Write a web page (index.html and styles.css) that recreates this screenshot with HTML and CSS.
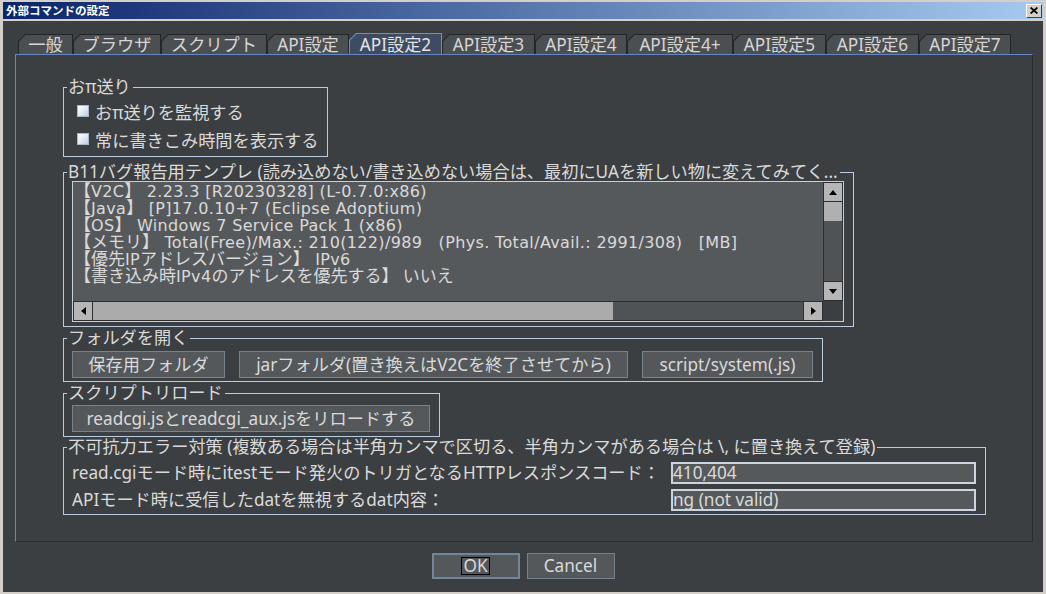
FILE: index.html
```html
<!DOCTYPE html>
<html lang="ja">
<head>
<meta charset="utf-8">
<title>外部コマンドの設定</title>
<link rel="stylesheet" href="styles.css">
</head>
<body>
<div class="window">
  <div class="titlebar">
    <span class="title">外部コマンドの設定</span>
    <span class="close"><svg width="8" height="7" viewBox="0 0 8 7"><path d="M0.6 0.5 L7.4 6.5 M7.4 0.5 L0.6 6.5" stroke="#000" stroke-width="1.7" fill="none"/></svg></span>
  </div>
  <div class="client">
    <div class="tabs">
      <div class="tab t1"><span>一般</span></div>
      <div class="tab t2"><span>ブラウザ</span></div>
      <div class="tab t3"><span>スクリプト</span></div>
      <div class="tab t4"><span>API設定</span></div>
      <div class="tab t5 sel"><span>API設定2</span></div>
      <div class="tab t6"><span>API設定3</span></div>
      <div class="tab t7"><span>API設定4</span></div>
      <div class="tab t8"><span>API設定4+</span></div>
      <div class="tab t9"><span>API設定5</span></div>
      <div class="tab t10"><span>API設定6</span></div>
      <div class="tab t11"><span>API設定7</span></div>
    </div>
    <div class="panel">
      <fieldset class="group">
        <legend>おπ送り</legend>
        <div class="body checks">
          <label class="check"><span class="cb"></span>おπ送りを監視する</label>
          <label class="check"><span class="cb"></span>常に書きこみ時間を表示する</label>
        </div>
      </fieldset>

      <fieldset class="group g-tpl">
        <legend>B11バグ報告用テンプレ (読み込めない/書き込めない場合は、最初にUAを新しい物に変えてみてく...</legend>
        <div class="body tpl">
          <div class="scrollpane">
            <div class="ta"><div class="ln">【<span class="lat">V2C</span>】<span class="lat"> 2.23.3 [R20230328] (L-0.7.0:x86)</span></div><div class="ln">【<span class="lat">Java</span>】<span class="lat"> [P]17.0.10+7 (Eclipse Adoptium)</span></div><div class="ln">【<span class="lat">OS</span>】<span class="lat"> Windows 7 Service Pack 1 (x86)</span></div><div class="ln">【メモリ】<span class="lat"> Total(Free)/Max.: 210(122)/989   (Phys. Total/Avail.: 2991/308)   [MB]</span></div><div class="ln">【優先<span class="lat">IP</span>アドレスバージョン】<span class="lat"> IPv6</span></div><div class="ln">【書き込み時<span class="lat">IPv4</span>のアドレスを優先する】 いいえ</div></div>
            <div class="vbar">
              <div class="arrow"><svg width="8" height="5" viewBox="0 0 8 5"><polygon points="4,0 8,5 0,5" fill="#000"/></svg></div>
              <div class="vthumb"></div>
              <div class="vtrack"></div>
              <div class="arrow"><svg width="8" height="5" viewBox="0 0 8 5"><polygon points="0,0 8,0 4,5" fill="#000"/></svg></div>
            </div>
            <div class="hbar">
              <div class="arrow"><svg width="5" height="8" viewBox="0 0 5 8"><polygon points="5,0 5,8 0,4" fill="#000"/></svg></div>
              <div class="hthumb"></div>
              <div class="htrack"></div>
              <div class="arrow"><svg width="5" height="8" viewBox="0 0 5 8"><polygon points="0,0 5,4 0,8" fill="#000"/></svg></div>
            </div>
            <div class="corner"></div>
          </div>
        </div>
      </fieldset>

      <fieldset class="group g-folder">
        <legend>フォルダを開く</legend>
        <div class="body buttons">
          <button class="btn b-save">保存用フォルダ</button>
          <button class="btn b-jar">jarフォルダ(置き換えはV2Cを終了させてから)</button>
          <button class="btn b-script">script/system(.js)</button>
        </div>
      </fieldset>

      <fieldset class="group g-reload">
        <legend>スクリプトリロード</legend>
        <div class="body buttons">
          <button class="btn b-reload">readcgi.jsとreadcgi_aux.jsをリロードする</button>
        </div>
      </fieldset>

      <fieldset class="group g-err">
        <legend>不可抗力エラー対策 (複数ある場合は半角カンマで区切る、半角カンマがある場合は \, に置き換えて登録)</legend>
        <div class="body form">
          <span class="lbl">read.cgiモード時にitestモード発火のトリガとなるHTTPレスポンスコード：</span>
          <span class="field">410,404</span>
          <span class="lbl">APIモード時に受信したdatを無視するdat内容：</span>
          <span class="field">ng (not valid)</span>
        </div>
      </fieldset>
    </div>
    <div class="actions">
      <button class="btn dlg ok"><span class="focus">OK</span></button>
      <button class="btn dlg">Cancel</button>
    </div>
  </div>
</div>
</body>
</html>
```
FILE: styles.css
```css
* { box-sizing: border-box; }
html, body { margin: 0; padding: 0; }
body {
  width: 1046px;
  height: 594px;
  overflow: hidden;
  font-family: "Noto Sans", "Noto Sans CJK JP", sans-serif;
  font-size: 17.2px;
  color: #dadada;
  background: #d4d0c8;
}
.window {
  width: 1046px;
  height: 594px;
  background: #d4d0c8;
  padding: 2px 3px 2px 3px;
  display: flex;
  flex-direction: column;
}
.titlebar {
  height: 17px;
  flex: none;
  margin-bottom: 2px;
  background: linear-gradient(to right, #0a246a 0%, #a6caf0 100%);
  display: flex;
  align-items: center;
  justify-content: space-between;
  padding-left: 3px;
}
.title {
  font-family: "Noto Sans CJK JP", sans-serif;
  font-weight: bold;
  font-size: 11.5px;
  line-height: 17px;
  color: #ffffff;
}
.close {
  width: 16px;
  height: 14px;
  margin-right: 1px;
  background: #d4d0c8;
  border-top: 1px solid #ffffff;
  border-left: 1px solid #ffffff;
  border-right: 1px solid #404040;
  border-bottom: 1px solid #404040;
  display: flex;
  align-items: center;
  justify-content: center;
}
.client {
  flex: 1;
  background: #3c3f41;
  display: flex;
  flex-direction: column;
}
.tabs {
  display: flex;
  align-items: flex-end;
  height: 21px;
  margin: 12px 0 0 15px;
}
.tab {
  height: 20px;
  padding: 1px 1px 0 1px;
  background: #232527;
  clip-path: polygon(0 7px, 7px 0, 100% 0, 100% 100%, 0 100%);
}
.t1 { width: 55px; }
.t2 { width: 88px; }
.t3 { width: 106px; }
.t4 { width: 82px; }
.t5 { width: 93px; }
.t6 { width: 93px; }
.t7 { width: 92px; }
.t8 { width: 106px; }
.t9 { width: 93px; }
.t10 { width: 93px; }
.t11 { width: 92px; }
.tab span {
  display: block;
  height: 100%;
  padding: 0;
  text-align: center;
  background: #4b4f52;
  clip-path: polygon(0 6.4px, 6.4px 0, 100% 0, 100% 100%, 0 100%);
  line-height: 20px;
  white-space: nowrap;
  color: #d6d6d6;
}
.tab.sel {
  height: 21px;
  background: #6d8ecb;
}
.tab.sel span {
  background: #3e4c63;
  line-height: 21px;
  color: #e4e4e4;
}
.panel {
  flex: 1;
  margin: 0 10px 0 12px;
  border-top: 1px solid #6686c4;
  border-left: 1px solid #6686c4;
  border-right: 1px solid #2a2c2e;
  border-bottom: 1px solid #2a2c2e;
  padding: 24px 0 0 47px;
  display: flex;
  flex-direction: column;
  align-items: flex-start;
}
.group {
  margin: 0;
  border: 1px solid #b9cde2;
  padding: 0 9px 0 3px;
  min-width: 0;
}
.group legend {
  padding: 0 2px 0 1px;
  height: 16px;
  line-height: 16px;
  white-space: nowrap;
}
.body { margin-left: 5px; }
.checks { padding: 2px 0 3px 0; }
.check {
  display: flex;
  align-items: center;
  height: 28px;
  padding: 0 0 0 5px;
  gap: 6px;
  white-space: nowrap;
}
.cb {
  width: 12px;
  height: 12px;
  border: 1px solid #a9b8c8;
  background: linear-gradient(135deg, #ffffff 0%, #e3ebf4 50%, #bccde0 100%);
}
.g-tpl { margin-top: 7px; }
.tpl { padding: 1px 0 4px 0; }
.scrollpane {
  width: 772px;
  height: 141px;
  border: 1px solid #c3cfdb;
  background: #56595b;
  display: grid;
  grid-template-columns: 750px 20px;
  grid-template-rows: 119px 20px;
}
.ta {
  padding: 0 0 0 1px;
  overflow: hidden;
  color: #dadada;
}
.ln {
  font-family: "Noto Sans", "Noto Sans CJK JP", sans-serif;
  font-size: 17px;
  line-height: 17px;
  height: 17px;
  white-space: pre;
}
.lat {
  font-family: "DejaVu Sans", "Noto Sans CJK JP", sans-serif;
  font-size: 16px;
  letter-spacing: 0.35px;
}
.vbar {
  display: flex;
  flex-direction: column;
}
.hbar {
  display: flex;
}
.arrow {
  flex: none;
  width: 20px;
  height: 20px;
  background: #b6b6b6;
  border: 1px solid #2c2e30;
  display: flex;
  align-items: center;
  justify-content: center;
}
.vthumb {
  height: 19px;
  background: #b0b0b0;
  border-left: 1px solid #2c2e30;
  border-right: 1px solid #2c2e30;
}
.vtrack {
  flex: 1;
  background: #505355;
  border-left: 1px solid #2c2e30;
  border-right: 1px solid #2c2e30;
}
.hthumb {
  width: 520px;
  background: #ababab;
  border-top: 1px solid #2c2e30;
  border-bottom: 1px solid #2c2e30;
}
.htrack {
  flex: 1;
  background: #505355;
  border-top: 1px solid #2c2e30;
  border-bottom: 1px solid #2c2e30;
}
.corner { background: #3c3f41; }
.g-folder, .g-reload { margin-top: 3px; }
.g-err { margin-top: 2px; }
.buttons {
  display: flex;
  gap: 14px;
}
.g-folder .buttons { padding: 5px 0 3px 0; }
.g-reload .buttons { padding: 4px 0 4px 0; }
.btn {
  height: 27px;
  padding: 0;
  margin: 0;
  font-family: "Noto Sans", "Noto Sans CJK JP", sans-serif;
  font-size: 17.2px;
  line-height: 25px;
  color: #dadada;
  background: #54585a;
  border: 1px solid #76838f;
  white-space: nowrap;
  text-align: center;
}
.b-save { width: 153px; }
.b-jar { width: 389px; }
.b-script { width: 171px; }
.b-reload { width: 358px; }
.form {
  display: grid;
  grid-template-columns: 599px 305px;
  row-gap: 5px;
  align-items: center;
  padding: 7px 0 3px 0;
}
.lbl {
  white-space: nowrap;
  line-height: 22px;
}
.field {
  height: 22px;
  border: 2px solid #ccd5de;
  background: #56595b;
  padding-left: 0;
  line-height: 18px;
  white-space: nowrap;
}
.actions {
  flex: none;
  display: flex;
  justify-content: center;
  gap: 7px;
  padding: 11px 0 13px 0;
}
.btn.dlg {
  width: 88px;
  height: 26px;
  line-height: 24px;
}
.btn.ok {
  border: 2px solid #72869b;
  line-height: 22px;
  display: flex;
  align-items: center;
  justify-content: center;
}
.focus {
  display: inline-block;
  height: 18px;
  line-height: 16px;
  padding: 0 1px;
  border: 1px solid #000000;
}
```
